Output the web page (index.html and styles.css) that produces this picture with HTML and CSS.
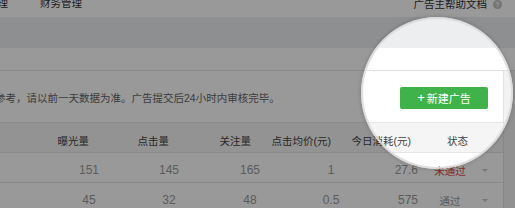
FILE: index.html
```html
<!DOCTYPE html>
<html lang="zh-CN">
<head>
<meta charset="utf-8">
<title>广告管理</title>
<link rel="stylesheet" href="styles.css">
</head>
<body>
<div class="page">
  <header class="topnav">
    <nav class="mainnav"><span class="nav-item">广告管理</span><span class="nav-item">财务管理</span></nav>
    <div class="help"><span>广告主帮助文档</span><span class="help-icon">?</span></div>
  </header>
  <div class="band"></div>
  <div class="tabs"></div>
  <div class="main">
    <section class="card">
      <div class="toolbar">
        <p class="notice">参考，请以前一天数据为准。广告提交后24小时内审核完毕。</p>
        <button class="btn-new"><span class="plus">+</span>新建广告</button>
      </div>
      <div class="table">
        <div class="row head">
          <div class="cell"></div>
          <div class="cell">曝光量</div>
          <div class="cell">点击量</div>
          <div class="cell">关注量</div>
          <div class="cell">点击均价(元)</div>
          <div class="cell c6">今日消耗(元)</div>
          <div class="cell c7">状态</div>
        </div>
        <div class="row">
          <div class="cell"></div>
          <div class="cell">151</div>
          <div class="cell">145</div>
          <div class="cell">165</div>
          <div class="cell">1</div>
          <div class="cell c6">27.6</div>
          <div class="cell c7"><span class="status fail">未通过</span><span class="caret"></span></div>
        </div>
        <div class="row">
          <div class="cell"></div>
          <div class="cell">45</div>
          <div class="cell">32</div>
          <div class="cell">48</div>
          <div class="cell">0.5</div>
          <div class="cell c6">575</div>
          <div class="cell c7"><span class="status">通过</span><span class="caret"></span></div>
        </div>
      </div>
    </section>
  </div>
</div>
<div class="spotlight"></div>
<div class="lens"></div>
</body>
</html>
```
FILE: styles.css
```css
* { box-sizing: border-box; }
html, body {
  margin: 0;
  padding: 0;
  width: 515px;
  height: 208px;
  overflow: hidden;
  background: #f2f2f2;
  font-family: "Liberation Sans", "Noto Sans CJK SC", sans-serif;
  font-size: 10.5px;
  color: #333;
}
.page { width: 515px; }

.topnav {
  height: 17px;
  background: #fff;
  display: flex;
  justify-content: space-between;
  align-items: flex-start;
  padding-right: 13px;
}
.mainnav {
  display: flex;
  gap: 32px;
  margin-left: -34px;
  line-height: 7px;
  color: #333;
}
.help {
  display: flex;
  align-items: center;
  gap: 6px;
  line-height: 7px;
  color: #333;
}
.help-icon {
  width: 9px;
  height: 9px;
  border-radius: 50%;
  background: #c4c4c4;
  color: #fff;
  font-size: 7px;
  font-weight: bold;
  display: flex;
  align-items: center;
  justify-content: center;
}

.band {
  height: 31px;
  background: #eceef0;
}
.tabs {
  height: 23px;
  background: #fff;
  border-bottom: 1px solid #e3e3e3;
}

.main { display: flex; }
.card {
  width: 504px;
  background: #fff;
  border-right: 1px solid #e3e3e3;
}
.toolbar {
  height: 51px;
  display: flex;
  align-items: center;
  justify-content: space-between;
  padding-top: 2px;
  padding-right: 15px;
}
.notice {
  margin: 0 0 0 -5px;
  color: #666;
  white-space: nowrap;
}
.btn-new {
  width: 88px;
  height: 22px;
  border: none;
  border-radius: 2px;
  background: #3fb34a;
  color: #fff;
  font-family: inherit;
  font-size: 11px;
  display: flex;
  align-items: center;
  justify-content: center;
  gap: 2px;
  padding: 0;
}
.plus { font-size: 13px; line-height: 1; margin-top: -1px; }

.row {
  display: grid;
  grid-template-columns: 49px 80px 80px 82px 80px 54px 1fr;
  height: 30px;
  border-top: 1px solid #e6e6e6;
  align-items: center;
  padding-top: 5px;
  color: #999;
  font-size: 12px;
}
.row .cell { text-align: center; white-space: nowrap; }
.row .c6 { text-align: right; padding-right: 7px; }
.row .c7 { display: flex; align-items: center; }
.head {
  background: #f5f5f5;
  color: #444;
  font-size: 10.5px;
}
.head .cell { display: flex; justify-content: flex-end; padding-right: 40px; }
.head .c6 { padding-right: 14px; }
.head .c7 { padding-right: 35px; }

.status { width: 50px; text-align: center; font-size: 10.5px; color: #999; }
.status.fail { color: #e04848; }
.caret {
  margin-left: 7px;
  width: 0;
  height: 0;
  border-left: 3px solid transparent;
  border-right: 3px solid transparent;
  border-top: 3px solid #c8c8c8;
}

.spotlight {
  position: fixed;
  left: 0;
  top: 0;
  width: 515px;
  height: 208px;
  background: radial-gradient(circle at 437px 93px, rgba(0,0,0,0) 75px, rgba(0,0,0,0.4) 76.5px);
  pointer-events: none;
}
.lens {
  position: fixed;
  left: 361px;
  top: 17px;
  width: 152px;
  height: 152px;
  border-radius: 50%;
  box-shadow: inset 0 0 0 2px rgba(220,220,220,0.9), 0 0 4px 1px rgba(0,0,0,0.15);
  pointer-events: none;
}
```
